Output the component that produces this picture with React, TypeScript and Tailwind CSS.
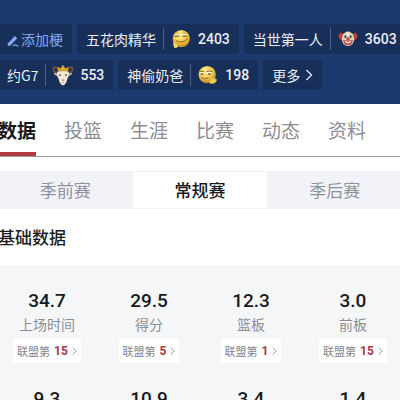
import React, { useState } from 'react';

function GrinFace() {
    return (
        <svg viewBox="1 1 20 20" className="h-5 w-5 shrink-0" aria-hidden="true">
            <defs>
                <radialGradient id="grin" cx="0.45" cy="0.3" r="0.7">
                    <stop offset="0" stopColor="#fff09a" />
                    <stop offset="0.6" stopColor="#f0c848" />
                    <stop offset="1" stopColor="#c08a1c" />
                </radialGradient>
            </defs>
            <circle cx="11.3" cy="10.6" r="8.6" fill="url(#grin)" />
            <path d="M4.6 5.8q2-1.4 4.4-.6M12.6 5q2.6-.8 4.8 1" fill="none" stroke="#b58a2c" strokeWidth="0.7" />
            <path d="M4.4 7.4q2.6-1 5.2 0M12.4 7.2q2.6-1 5.2.2" fill="none" stroke="#fffbe4" strokeWidth="1.5" />
            <path d="M4.4 8.2q2.6-.4 5.2 0M12.4 8.2q2.6-.4 5.2 0" fill="none" stroke="#4f390f" strokeWidth="0.9" />
            <path d="M6 12.6q5.6 3.6 11.8-2" fill="none" stroke="#8a611a" strokeWidth="1" />
            <path d="M3.4 13.2q1.6 1 2.4 2.4l1.8 1.4q.8 1.4-.4 2.6q-2.2.8-3.4-.6q-.8-2.6-.4-5.8z" fill="#f4d765" />
        </svg>
    );
}

function SlyFace() {
    return (
        <svg viewBox="1 1 20 20" className="h-5 w-5 shrink-0" aria-hidden="true">
            <defs>
                <radialGradient id="sly" cx="0.4" cy="0.3" r="0.75">
                    <stop offset="0" stopColor="#fff0a0" />
                    <stop offset="0.6" stopColor="#ecc348" />
                    <stop offset="1" stopColor="#a87619" />
                </radialGradient>
            </defs>
            <circle cx="10.2" cy="10.6" r="8.7" fill="url(#sly)" />
            <path d="M2.8 7.6q2.2-1.2 4.4.2M9.4 7.6q3-1.6 6 .2" fill="none" stroke="#6b4b14" strokeWidth="0.8" />
            <path d="M2.8 9.2q2-.8 4.2 0M9.6 9.2q2.8-1 5.4 0" fill="none" stroke="#fffbe4" strokeWidth="1.4" />
            <path d="M3.6 10h2.6M11 10h2.8" stroke="#3d2a08" strokeWidth="1.1" />
            <path d="M4.6 13.6q3 2.4 7 .2" fill="none" stroke="#8a611a" strokeWidth="0.9" />
            <path d="M12.2 16.8q1.8-2.8 4-4.4q1-.2.8 1l-.6 1.4q2.2-.8 3.2.4q.4 2.8-2.4 4q-3.2 1.2-5-.4z" fill="#eecb55" stroke="#b3831f" strokeWidth="0.4" />
        </svg>
    );
}

function ClownFace() {
    return (
        <svg viewBox="0 0 22 22" className="h-5 w-5 shrink-0" aria-hidden="true">
            <path d="M6 5.5q-4-3-5 .8q-1.4 2 .4 3.6q0 3 4.6 2.2zM16 5.5q4-3 5 .8q1.4 2-.4 3.6q0 3-4.6 2.2z" fill="#b8402f" />
            <ellipse cx="11" cy="10.8" rx="6.8" ry="8" fill="#ecd3b8" />
            <path d="M5.4 6.6q5.6-7 11.2 0l-1.4 1H6.8z" fill="#f6e6d2" />
            <ellipse cx="8" cy="8.2" rx="2" ry="2.5" fill="#a9bfc9" />
            <ellipse cx="14" cy="8.2" rx="2" ry="2.5" fill="#a9bfc9" />
            <circle cx="8.1" cy="8.5" r="1" fill="#2c2522" />
            <circle cx="13.9" cy="8.5" r="1" fill="#2c2522" />
            <path d="M6 4.9q1.4-1.6 3-.6M13 4.3q1.8-1 3 .6" fill="none" stroke="#7b3c22" strokeWidth="0.8" />
            <path d="M5.6 12q5.4 1.4 10.8 0q-.6 5.2-5.4 5.6q-4.8-.4-5.4-5.6z" fill="#b93a2c" />
            <path d="M7 13.3q4 1.2 8 0q-1 2.6-4 2.7q-3-.1-4-2.7z" fill="#fff" />
            <circle cx="11" cy="11" r="1.8" fill="#d1392b" />
        </svg>
    );
}

function Goat() {
    return (
        <svg viewBox="0 0 22 22" className="-mx-px h-[22px] w-[22px] shrink-0" aria-hidden="true">
            <path d="M7.6 6.8Q4.2 2 1.8 3.6Q.2 6 3.6 8.6" fill="none" stroke="#6f4d3a" strokeWidth="2" />
            <path d="M14.4 6.8Q17.8 2 20.2 3.6Q21.8 6 18.4 8.6" fill="none" stroke="#6f4d3a" strokeWidth="2" />
            <path d="M1.4 9q3.2-.6 5.4.8l-1 2.8q-3-.4-4.4-3.6zM20.6 9q-3.2-.6-5.4.8l1 2.8q3-.4 4.4-3.6z" fill="#c6a98a" />
            <path d="M5 7.8q6-2.4 12 0q.2 5-2 8.2q-.8 4.4-4 5.4q-3.2-1-4-5.4q-2.2-3.2-2-8.2z" fill="#f1e7d5" />
            <path d="M6 7.4L5.8 2.8l2.6 2L11 1l2.6 3.8l2.6-2L16 7.4q-5-1.4-10 0z" fill="#dfb036" stroke="#a87a1c" strokeWidth="0.4" />
            <path d="M7 10.8l2 .6M15 10.8l-2 .6" stroke="#5a4636" strokeWidth="1.1" />
            <path d="M9.6 15.8q1.4-.8 2.8 0l-1.4 1.4z" fill="#a07c62" />
            <path d="M9.6 18.4q1.4.8 2.8 0" fill="none" stroke="#b59a80" strokeWidth="0.7" />
        </svg>
    );
}

function PencilIcon() {
    return (
        <svg viewBox="0 0 12 12" className="mt-1 h-3 w-3 shrink-0" aria-hidden="true">
            <path d="M1 8.2L7.8 1l2.4 2.2L3.4 10.4L.6 11z" fill="#86a8f2" />
            <path d="M6 11.2q1.4-2 2.6-1.2t2.8.8" fill="none" stroke="#86a8f2" strokeWidth="1.2" />
        </svg>
    );
}

function Chevron({ className }: { className: string }) {
    return (
        <svg viewBox="0 0 6 10" fill="none" stroke="currentColor" strokeWidth="1" className={className} aria-hidden="true">
            <path d="M.8.8L5.2 5L.8 9.2" />
        </svg>
    );
}

function Meme({ name, count, icon }: { name: string; count: number; icon: React.ReactNode }) {
    return (
        <button type="button" className="flex h-[30px] shrink-0 items-center gap-[7px] rounded-xs bg-[#172f59] px-[9px] text-sm text-[#e9edf5]">
            <span>{name}</span>
            <span className="h-[22px] w-px bg-[#48608c]" />
            {icon}
            <span className="font-['Roboto',sans-serif] font-medium">{count}</span>
        </button>
    );
}

const tabs = ['数据', '投篮', '生涯', '比赛', '动态', '资料'];
const seasons = ['季前赛', '常规赛', '季后赛'];

const stats = [
    { value: '34.7', label: '上场时间', rank: 15 },
    { value: '29.5', label: '得分', rank: 5 },
    { value: '12.3', label: '篮板', rank: 1 },
    { value: '3.0', label: '前板', rank: 15 },
    { value: '9.3', label: '后板', rank: 3 },
    { value: '10.9', label: '助攻', rank: 2 },
    { value: '3.4', label: '失误', rank: 8 },
    { value: '1.4', label: '抢断', rank: 20 },
];

export default function App() {
    const [tab, setTab] = useState('数据');
    const [season, setSeason] = useState('常规赛');

    return (
        <div className="h-screen overflow-hidden bg-white font-['Noto_Sans_CJK_SC','Noto_Sans',sans-serif]">
            <header className="bg-[#1c3a6e] pt-6 pb-[14px]">
                <div className="-mx-0.5 flex flex-col gap-[6px] whitespace-nowrap">
                    <div className="flex gap-[5px]">
                        <button type="button" className="flex h-[30px] shrink-0 items-center gap-[2px] rounded-xs bg-[#172f59] px-[9px] text-sm text-[#86a8f2]">
                            <PencilIcon />
                            添加梗
                        </button>
                        <Meme name="五花肉精华" count={2403} icon={<GrinFace />} />
                        <Meme name="当世第一人" count={3603} icon={<ClownFace />} />
                    </div>
                    <div className="flex gap-[5px]">
                        <Meme name="约G7" count={553} icon={<Goat />} />
                        <Meme name="神偷奶爸" count={198} icon={<SlyFace />} />
                        <button type="button" className="flex h-[30px] shrink-0 items-center gap-[5px] rounded-xs bg-[#172f59] px-[9px] text-sm text-[#e9edf5]">
                            更多
                            <Chevron className="h-3 w-2" />
                        </button>
                    </div>
                </div>
            </header>

            <nav className="border-b border-[#9b9c9f]">
                <div className="-mx-0.5 flex gap-7">
                    {tabs.map((name) => (
                        <button
                            key={name}
                            type="button"
                            onClick={() => setTab(name)}
                            className={`h-[52px] shrink-0 border-b-4 pt-[3px] text-[19px] leading-7 ${
                                tab === name
                                    ? 'border-[#b23a3e] font-bold text-[#18191c]'
                                    : 'border-transparent text-[#8c8e93]'
                            }`}
                        >
                            {name}
                        </button>
                    ))}
                </div>
            </nav>

            <div className="-mx-0.5 mt-[14px] grid grid-cols-3 bg-[#f2f3f8] py-px">
                {seasons.map((name) => (
                    <button
                        key={name}
                        type="button"
                        onClick={() => setSeason(name)}
                        className={`h-9 text-[17px] ${
                            season === name ? 'bg-white font-medium text-[#18191c]' : 'text-[#8f929e]'
                        }`}
                    >
                        {name}
                    </button>
                ))}
            </div>

            <section>
                <h2 className="-mx-0.5 py-4 text-[17px] leading-6 font-medium text-[#1c1d20]">基础数据</h2>
                <div className="-mx-1 grid grid-cols-4 gap-y-6 rounded-sm bg-[#f5f6f8] pt-6">
                    {stats.map((stat) => (
                        <div key={stat.label} className="flex flex-col items-center">
                            <div className="font-['Roboto',sans-serif] text-[19px] leading-6 font-medium text-[#18191c]">{stat.value}</div>
                            <div className="text-sm leading-[22px] text-[#8c8e94]">{stat.label}</div>
                            <button type="button" className="mt-1 flex h-6 items-center rounded-xs bg-white px-1 text-[11px] text-[#85878e]">
                                联盟第
                                <span className="mx-1 font-['Roboto',sans-serif] text-xs font-bold text-[#a8393f]">{stat.rank}</span>
                                <Chevron className="h-2 w-[5px]" />
                            </button>
                        </div>
                    ))}
                </div>
            </section>
        </div>
    );
}
